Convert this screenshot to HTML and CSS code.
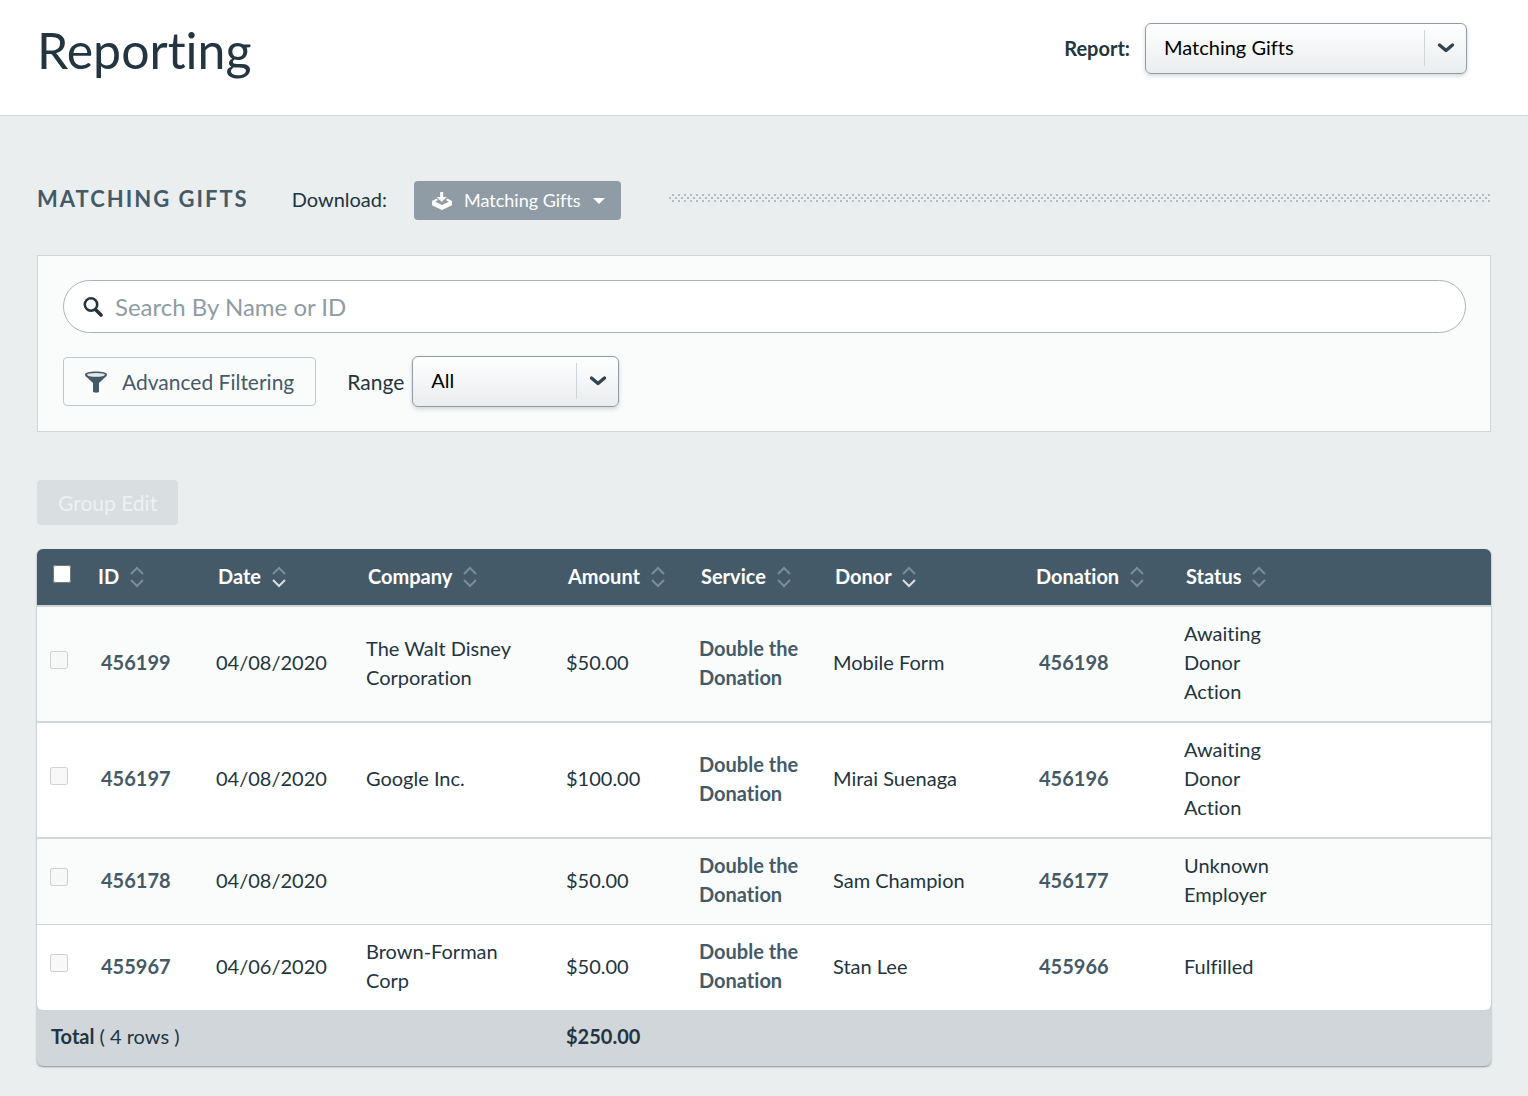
FILE: index.html
```
<!DOCTYPE html>
<html lang="en">
<head>
  <meta charset="UTF-8">
  <meta name="viewport" content="width=device-width, initial-scale=1.0">
  <title>Reporting</title>
  <link rel="stylesheet" href="styles.css">
</head>
<body>
  <svg class="sprite" aria-hidden="true">
    <symbol id="chevron" viewBox="0 0 18 12">
      <path d="M2.5 3 L9 8.5 L15.5 3" fill="none" stroke="currentColor" stroke-width="3.4" stroke-linecap="round" stroke-linejoin="round"/>
    </symbol>
    <symbol id="sort" viewBox="0 0 14 22">
      <path class="up" d="M1 8 L7 2 L13 8"/>
      <path class="down" d="M1 14 L7 20 L13 14"/>
    </symbol>
    <symbol id="sort-down" viewBox="0 0 14 22">
      <path class="up" d="M1 8 L7 2 L13 8"/>
      <path class="down active" d="M1 14 L7 20 L13 14"/>
    </symbol>
  </svg>

  <header class="page-header">
    <h1>Reporting</h1>
    <div class="report-picker">
      <label for="report">Report:</label>
      <div class="select select-wide">
        <select id="report">
          <option>Matching Gifts</option>
        </select>
        <svg class="chevron"><use href="#chevron"/></svg>
      </div>
    </div>
  </header>

  <main>
    <div class="section-head">
      <h2>Matching Gifts</h2>
      <span class="download-label">Download:</span>
      <button type="button" class="btn-download">
        <svg width="20" height="18" viewBox="0 0 20 18" fill="#fff">
          <path d="M8.2 0h3v5h3.6L9.7 10 4.6 5h3.6z"/>
          <path d="M4.6 6.4 0 9v4.2L10 18l10-4.8V9l-4.6-2.6-1.6 1.6 3 1.7L10 13 3.2 9.7l3-1.7z"/>
        </svg>
        Matching Gifts
        <svg width="12" height="6" viewBox="0 0 12 6" fill="#fff"><path d="M0 0h12L6 6z"/></svg>
      </button>
      <div class="dots"></div>
    </div>

    <form class="filters">
      <div class="search">
        <svg width="20" height="20" viewBox="0 0 20 20" fill="none" stroke="#233540">
          <circle cx="8" cy="7.5" r="6.2" stroke-width="2.6"/>
          <path d="M12.5 12.5 L18 18" stroke-width="3.6" stroke-linecap="round"/>
        </svg>
        <input type="search" placeholder="Search By Name or ID" aria-label="Search By Name or ID">
      </div>
      <div class="filter-row">
        <button type="button" class="btn-filter">
          <svg width="22" height="22" viewBox="0 0 22 22">
            <path d="M0 3.5C0 1.5 5 .5 11 .5s11 1 11 3c0 1.2-.8 2-1.8 2.8L14 12v8.5c0 .8-1.4 1.2-3 1.2s-3-.4-3-1.2V12L1.8 6.3C.8 5.5 0 4.7 0 3.5z" fill="#455a68"/>
            <ellipse cx="11" cy="3.8" rx="9" ry="1.9" fill="#e4ebe6"/>
          </svg>
          Advanced Filtering
        </button>
        <label for="range">Range</label>
        <div class="select">
          <select id="range">
            <option>All</option>
          </select>
          <svg class="chevron"><use href="#chevron"/></svg>
        </div>
      </div>
    </form>

    <button type="button" class="btn-group" disabled>Group Edit</button>

    <table class="report">
      <colgroup>
        <col class="col-check">
        <col class="col-id">
        <col class="col-date">
        <col class="col-company">
        <col class="col-amount">
        <col class="col-service">
        <col class="col-donor">
        <col class="col-donation">
        <col class="col-status">
        <col>
      </colgroup>
      <thead>
        <tr>
          <th><input type="checkbox" aria-label="Select all rows"></th>
          <th>ID <svg class="sort"><use href="#sort"/></svg></th>
          <th>Date <svg class="sort"><use href="#sort-down"/></svg></th>
          <th>Company <svg class="sort"><use href="#sort"/></svg></th>
          <th>Amount <svg class="sort"><use href="#sort"/></svg></th>
          <th>Service <svg class="sort"><use href="#sort"/></svg></th>
          <th>Donor <svg class="sort"><use href="#sort-down"/></svg></th>
          <th>Donation <svg class="sort"><use href="#sort"/></svg></th>
          <th>Status <svg class="sort"><use href="#sort"/></svg></th>
          <th></th>
        </tr>
      </thead>
      <tbody>
        <tr>
          <td><input type="checkbox" aria-label="Select 456199" disabled></td>
          <td><a href="#" class="record">456199</a></td>
          <td>04/08/2020</td>
          <td>The Walt Disney Corporation</td>
          <td>$50.00</td>
          <td><a href="#">Double the Donation</a></td>
          <td>Mobile Form</td>
          <td><a href="#" class="record">456198</a></td>
          <td>Awaiting Donor Action</td>
          <td></td>
        </tr>
        <tr>
          <td><input type="checkbox" aria-label="Select 456197" disabled></td>
          <td><a href="#" class="record">456197</a></td>
          <td>04/08/2020</td>
          <td>Google Inc.</td>
          <td>$100.00</td>
          <td><a href="#">Double the Donation</a></td>
          <td>Mirai Suenaga</td>
          <td><a href="#" class="record">456196</a></td>
          <td>Awaiting Donor Action</td>
          <td></td>
        </tr>
        <tr>
          <td><input type="checkbox" aria-label="Select 456178" disabled></td>
          <td><a href="#" class="record">456178</a></td>
          <td>04/08/2020</td>
          <td></td>
          <td>$50.00</td>
          <td><a href="#">Double the Donation</a></td>
          <td>Sam Champion</td>
          <td><a href="#" class="record">456177</a></td>
          <td>Unknown Employer</td>
          <td></td>
        </tr>
        <tr>
          <td><input type="checkbox" aria-label="Select 455967" disabled></td>
          <td><a href="#" class="record">455967</a></td>
          <td>04/06/2020</td>
          <td>Brown-Forman Corp</td>
          <td>$50.00</td>
          <td><a href="#">Double the Donation</a></td>
          <td>Stan Lee</td>
          <td><a href="#" class="record">455966</a></td>
          <td>Fulfilled</td>
          <td></td>
        </tr>
      </tbody>
      <tfoot>
        <tr>
          <td colspan="4"><strong>Total</strong> ( 4 rows )</td>
          <td><strong>$250.00</strong></td>
          <td colspan="5"></td>
        </tr>
      </tfoot>
    </table>
  </main>
</body>
</html>
```
FILE: styles.css
```
* {
  margin: 0;
  padding: 0;
  box-sizing: border-box;
}

body {
  background: #eaeeef;
  color: #233540;
  font-family: Lato, "Open Sans", sans-serif;
  font-size: 20px;
  line-height: 29px;
  font-variant-ligatures: none;
}

button,
input,
select {
  font: inherit;
  font-variant-ligatures: none;
}

a {
  color: #455a68;
  font-weight: 700;
  text-decoration: none;
}

.sprite {
  display: block;
  width: 0;
  height: 0;
}

.page-header {
  display: flex;
  justify-content: space-between;
  align-items: flex-start;
  padding: 23px 61px 37px 37px;
  background: #fff;
  border-bottom: 1px solid #d0d6da;
}

h1 {
  font-size: 50px;
  font-weight: 400;
  line-height: 55px;
}

.report-picker {
  display: flex;
  align-items: center;
  gap: 15px;
}

.report-picker label {
  font-weight: 700;
}

/* selects */
.select {
  position: relative;
  width: 207px;
}

.select-wide {
  width: 322px;
}

.select select {
  display: block;
  width: 100%;
  height: 51px;
  padding: 0 50px 2px 18px;
  appearance: none;
  color: #000;
  background: linear-gradient(#fff, #eaecee);
  border: 1px solid #8f9ca5;
  border-radius: 6px;
  box-shadow: 0 2px 4px rgba(35, 53, 64, 0.2);
}

.select::after {
  content: "";
  position: absolute;
  top: 7px;
  right: 42px;
  width: 1px;
  height: 36px;
  background: #cfd6da;
}

.chevron {
  position: absolute;
  top: 19px;
  right: 12px;
  width: 18px;
  height: 12px;
  color: #33444f;
  pointer-events: none;
}

main {
  padding: 65px 37px 29px;
}

.section-head {
  display: flex;
  align-items: flex-start;
  margin-bottom: 35px;
}

h2 {
  margin-right: 43px;
  color: #455a68;
  font-size: 22px;
  line-height: 35px;
  letter-spacing: 2px;
  text-transform: uppercase;
}

.download-label {
  margin-right: 27px;
  line-height: 36px;
}

.btn-download {
  display: flex;
  align-items: center;
  gap: 12px;
  height: 39px;
  margin-right: 48px;
  padding: 0 16px 0 18px;
  color: #fff;
  background: #8f9ca5;
  border: 0;
  border-radius: 4px;
  font-size: 18px;
}

.dots {
  flex: 1;
  height: 8px;
  margin-top: 13px;
  background-image:
    radial-gradient(circle at 1px 1px, #b5bdc3 1px, transparent 1px),
    radial-gradient(circle at 1px 1px, #b5bdc3 1px, transparent 1px);
  background-size: 6px 6px;
  background-position: 3px 0, 0 3px;
}

.filters {
  margin-bottom: 48px;
  padding: 24px;
  padding-left: 25px;
  background: #fafcfb;
  border: 1px solid #d0d6da;
}

.search {
  display: flex;
  align-items: center;
  gap: 12px;
  height: 53px;
  margin-bottom: 23px;
  padding: 0 19px;
  background: #fff;
  border: 1px solid #a9b3ba;
  border-radius: 27px;
}

.search input {
  flex: 1;
  background: none;
  border: 0;
  outline: 0;
  font-size: 24px;
}

.search input::placeholder {
  color: #8f9ca5;
}

.filter-row {
  display: flex;
  align-items: center;
}

.filter-row label {
  margin: 0 8px 0 31px;
  font-size: 21px;
}

.btn-filter {
  display: flex;
  align-items: center;
  gap: 15px;
  height: 49px;
  padding: 0 21px;
  color: #455a68;
  background: none;
  border: 1px solid #bfc8cd;
  border-radius: 4px;
  font-size: 21px;
}

.btn-group {
  display: block;
  height: 45px;
  margin-bottom: 24px;
  padding: 0 21px;
  color: #eef1f2;
  background: #d9dee0;
  border: 0;
  border-radius: 4px;
  font-size: 21px;
}

/* report table */
.report {
  width: 100%;
  table-layout: fixed;
  border-spacing: 0;
  background: #d1d6da;
  border-radius: 6px;
  box-shadow: 0 1px 2px rgba(35, 53, 64, 0.5);
}

.col-check { width: 45px; }
.col-id { width: 120px; }
.col-date { width: 150px; }
.col-company { width: 200px; }
.col-amount { width: 133px; }
.col-service { width: 134px; }
.col-donor { width: 201px; }
.col-donation { width: 150px; }
.col-status { width: 128px; }

.report th {
  height: 58px;
  padding: 0 0 1px 16px;
  color: #fff;
  background: #455a68;
  border-bottom: 2px solid #d0d6da;
  text-align: left;
  white-space: nowrap;
}

.report th:first-child {
  border-top-left-radius: 6px;
}

.report th:last-child {
  border-top-right-radius: 6px;
}

.report td {
  padding: 12px 14px 15px;
  background: #fff;
}

.report tbody td {
  border-bottom: 2px solid #d0d6da;
}

.report tbody tr:nth-child(odd) td {
  background: #fafcfb;
}

.report tbody tr:nth-child(3) td {
  border-bottom-width: 1px;
}

.report tbody tr:last-child td {
  background: #fff;
  border-bottom: 0;
}

.report tbody tr:last-child td:first-child {
  border-bottom-left-radius: 6px;
}

.report tbody tr:last-child td:last-child {
  border-bottom-right-radius: 6px;
}

.report tfoot td {
  background: none;
}

.report input {
  display: block;
  width: 18px;
  height: 18px;
  margin-bottom: 6px;
}

.report td input {
  margin-left: -1px;
}

.record {
  padding-left: 5px;
}

.sort {
  width: 14px;
  height: 22px;
  margin-left: 6px;
  vertical-align: -4px;
  fill: none;
  stroke: #7d8c96;
  stroke-width: 2;
}

.active {
  stroke: #d9dee2;
}
```
